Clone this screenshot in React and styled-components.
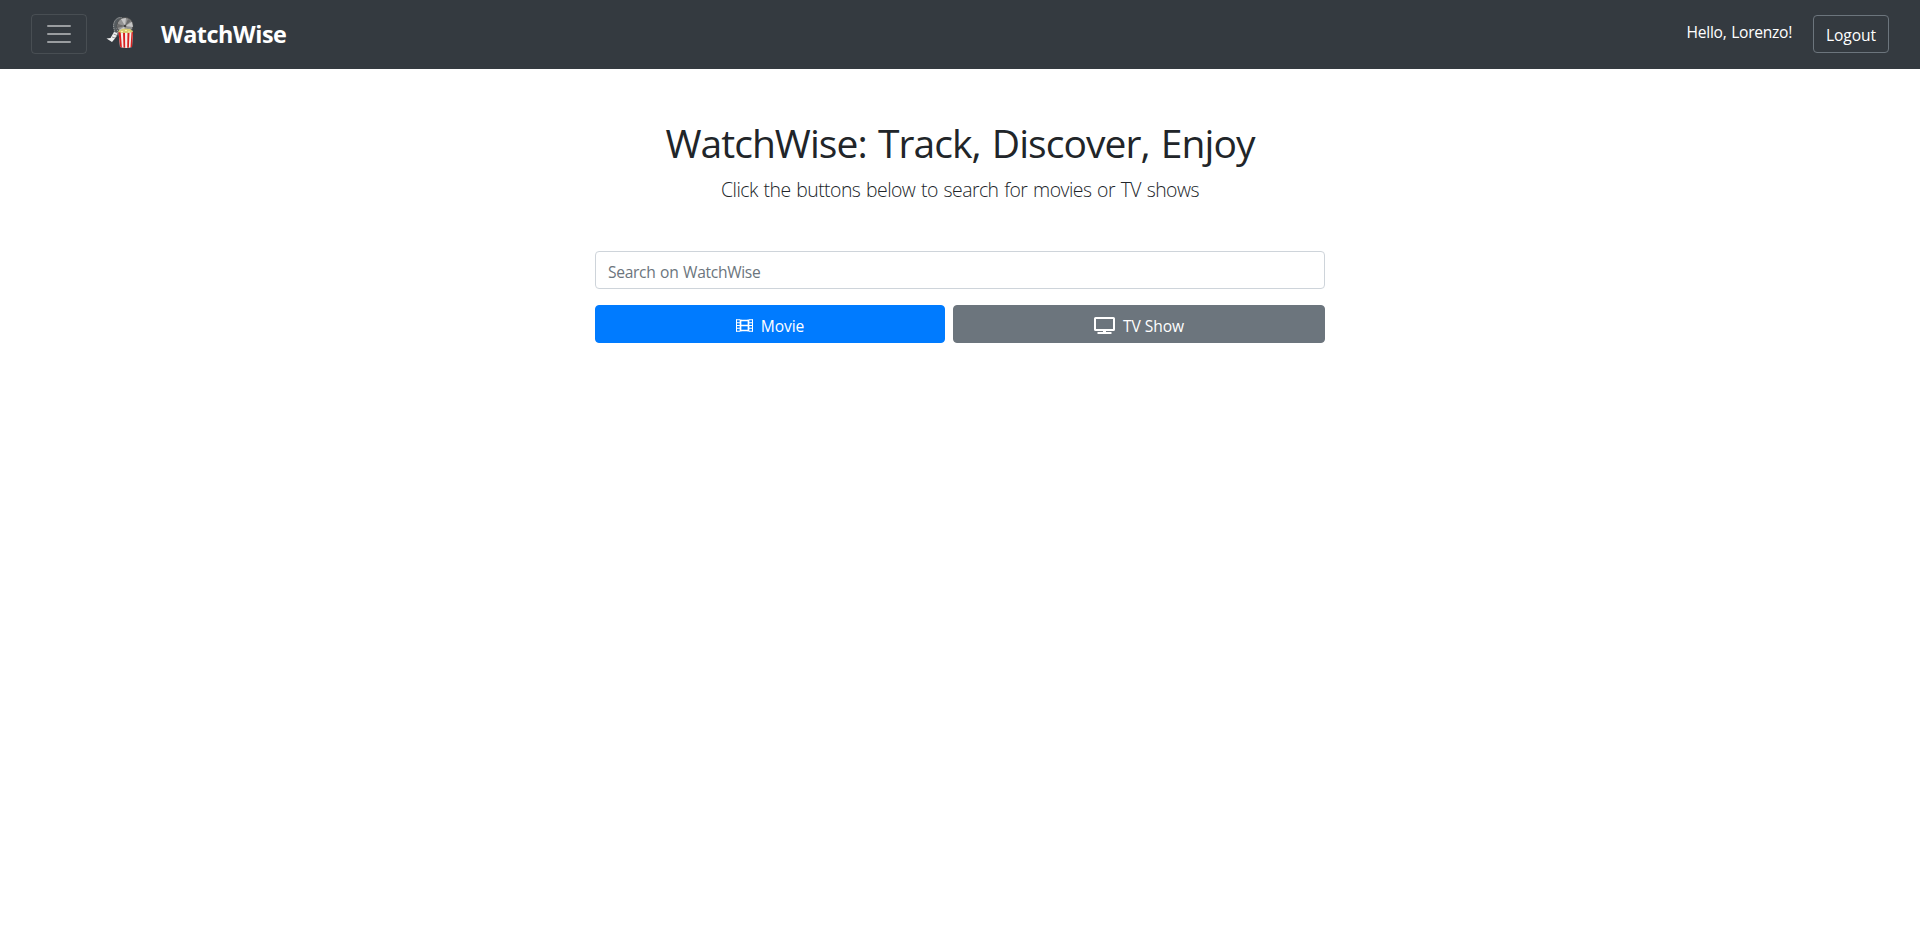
import React from "react";
import styled, { createGlobalStyle } from "styled-components";

const GlobalStyle = createGlobalStyle`
  *, *::before, *::after { box-sizing: border-box; }
  body {
    margin: 0;
    background: #fff;
    color: #212529;
    font-family: "Segoe UI", "Open Sans", "Noto Sans", sans-serif;
    font-size: 15.6px;
    line-height: 24px;
  }
`;

const Navbar = styled.nav`
  display: flex;
  align-items: center;
  height: 69px;
  padding: 0 31px;
  background: #343a40;
  color: #fff;
`;

const Toggler = styled.button`
  display: flex;
  align-items: center;
  justify-content: center;
  width: 56px;
  height: 40px;
  margin: 0 19px 1px 0;
  padding: 0;
  border: 1px solid rgba(255, 255, 255, 0.1);
  border-radius: 4px;
  background: transparent;
`;

const Brand = styled.a`
  display: flex;
  align-items: center;
  padding-bottom: 2px;
  color: #fff;
  font-size: 23.4px;
  font-weight: 700;
  line-height: 36px;
  letter-spacing: -0.45px;
  white-space: nowrap;
`;

const Logo = styled.svg`
  display: block;
  width: 30px;
  height: 34px;
  margin: 0 25px 3px 0;
`;

const UserArea = styled.div`
  display: flex;
  align-items: center;
  gap: 21px;
  margin-left: auto;
  padding-bottom: 1px;
`;

const Greeting = styled.span`
  padding-bottom: 4px;
  letter-spacing: -0.28px;
  word-spacing: 1px;
  white-space: nowrap;
`;

const Button = styled.button`
  display: flex;
  align-items: center;
  justify-content: center;
  gap: 8px;
  width: ${(p) => p.$width};
  height: 38px;
  padding: ${(p) => p.$padTop || "3px"} 0 0;
  border: 1px solid ${(p) => p.$border};
  border-radius: 4px;
  background: ${(p) => p.$fill || "transparent"};
  color: #fff;
  font: inherit;
  letter-spacing: -0.1px;
  white-space: nowrap;

  svg { margin-bottom: 1px; }
`;

const Main = styled.main`
  display: flex;
  flex-direction: column;
  align-items: center;
  padding-top: 50px;
`;

const Title = styled.h1`
  margin: 0 0 8px;
  font-size: 39px;
  font-weight: 400;
  line-height: 48px;
  letter-spacing: -0.94px;
  word-spacing: 2px;
  white-space: nowrap;
`;

const Lead = styled.p`
  margin: 0 0 47px;
  font-size: 19.4px;
  font-weight: 300;
  line-height: 29px;
  letter-spacing: -0.53px;
  word-spacing: 1.2px;
  white-space: nowrap;
`;

const SearchForm = styled.form`
  display: flex;
  flex-direction: column;
  gap: 16px;
  width: 730px;
`;

const SearchInput = styled.input`
  width: 100%;
  height: 38px;
  padding: 3px 12px 0;
  border: 1px solid #ced4da;
  border-radius: 4px;
  background: #fff;
  font: inherit;
  letter-spacing: -0.33px;
  word-spacing: 1px;
  &::placeholder { color: #6c757d; opacity: 1; }
`;

const ButtonRow = styled.div`
  display: flex;
  gap: 8px;
`;

const MenuIcon = () => (
  <svg width="30" height="30" viewBox="0 0 30 30" fill="none">
    <path d="M4 7h22M4 15h22M4 23h22" stroke="#fff" strokeOpacity="0.5" strokeWidth="2" strokeLinecap="round" />
  </svg>
);

const PopcornLogo = () => (
  <Logo viewBox="0 0 30 34">
    <path d="M16 3c-5-2-10 4-8 11 1 3 0 5-1 7l3 1c2-3 2-6 1-9" fill="#555b5f" stroke="#b4b4b4" strokeWidth="0.8" strokeDasharray="1.5 0.7" />
    <circle cx="19" cy="10.5" r="8" fill="#929292" stroke="#4a4a4a" strokeWidth="0.8" />
    <path d="M19 11 15 4l5-1zM19 11l7-4 1 5zM19 11l-1 7-5-3z" fill="#c5c5c5" />
    <path d="m19 11 3-7 3 2zM19 11l-7-2-1 4z" fill="#6b6b6b" />
    <circle cx="19" cy="11" r="1.3" fill="#444" />
    <path d="m8 17 3.5 1-2.500 5.500-3 3.500-5.500-3.500 4-.500z" fill="#f1f1f1" />
    <path d="m7.500 19 2.500 1M6 22l3 1" stroke="#777" strokeWidth="0.7" />
    <path d="M12.500 17H27l-1 15q-5.500 2-12 0z" fill="#f5eeea" />
    <path d="M12.500 17h2.200l1.200 15.500-1.700-.500zM17 17h2l.2 15.800h-1.700zM21.500 17h2l-.6 15.700h-1.700zM25.500 17H27l-1 15-1.500.3z" fill="#d8201f" />
    <path d="M12 17q1-3 3-2 1-2 3-1 2-1 4 0 2-1 3 1 2 0 2 2-7 2-15 0" fill="#d9cd72" />
    <path d="M15 16.500h2M19 15.500h2M22 17h2" stroke="#fff0a7" strokeWidth="1" />
  </Logo>
);

const FilmIcon = () => (
  <svg width="17" height="13" viewBox="0 0 17 13" fill="none" stroke="#fff">
    <path d="M.5.5v12M16.500.5v12" strokeWidth="1" />
    <path d="M4.500.5v12M12.500.5v12" strokeWidth="1.700" />
    <path d="M5 1.500h7M5 6.500h7M5 11.500h7" strokeWidth="1.500" />
    <path d="M0 .8h4M0 3.700h4M0 6.500h4M0 9.300h4M0 12.200h4M13 .8h4M13 3.700h4M13 6.500h4M13 9.300h4M13 12.200h4" strokeWidth="1.100" />
  </svg>
);

const TvIcon = () => (
  <svg width="21" height="17" viewBox="0 0 21 17" fill="none" stroke="#fff">
    <rect x="1" y="1" width="19" height="12" rx="0.6" strokeWidth="2" />
    <path d="M3.500 16h14" strokeWidth="2" />
    <path d="M10.500 13v3" strokeWidth="3" />
  </svg>
);

export default function App() {
  return (
    <>
      <GlobalStyle />
      <Navbar>
        <Toggler type="button" aria-label="Menu"><MenuIcon /></Toggler>
        <Brand><PopcornLogo />WatchWise</Brand>
        <UserArea>
          <Greeting>Hello, Lorenzo!</Greeting>
          <Button type="button" $width="76px" $padTop="2px" $border="#6c757d">Logout</Button>
        </UserArea>
      </Navbar>
      <Main>
        <Title>WatchWise: Track, Discover, Enjoy</Title>
        <Lead>Click the buttons below to search for movies or TV shows</Lead>
        <SearchForm>
          <SearchInput placeholder="Search on WatchWise" />
          <ButtonRow>
            <Button type="button" $width="350px" $border="#007bff" $fill="#007bff"><FilmIcon />Movie</Button>
            <Button type="button" $width="372px" $border="#6c757d" $fill="#6c757d"><TvIcon />TV Show</Button>
          </ButtonRow>
        </SearchForm>
      </Main>
    </>
  );
}
